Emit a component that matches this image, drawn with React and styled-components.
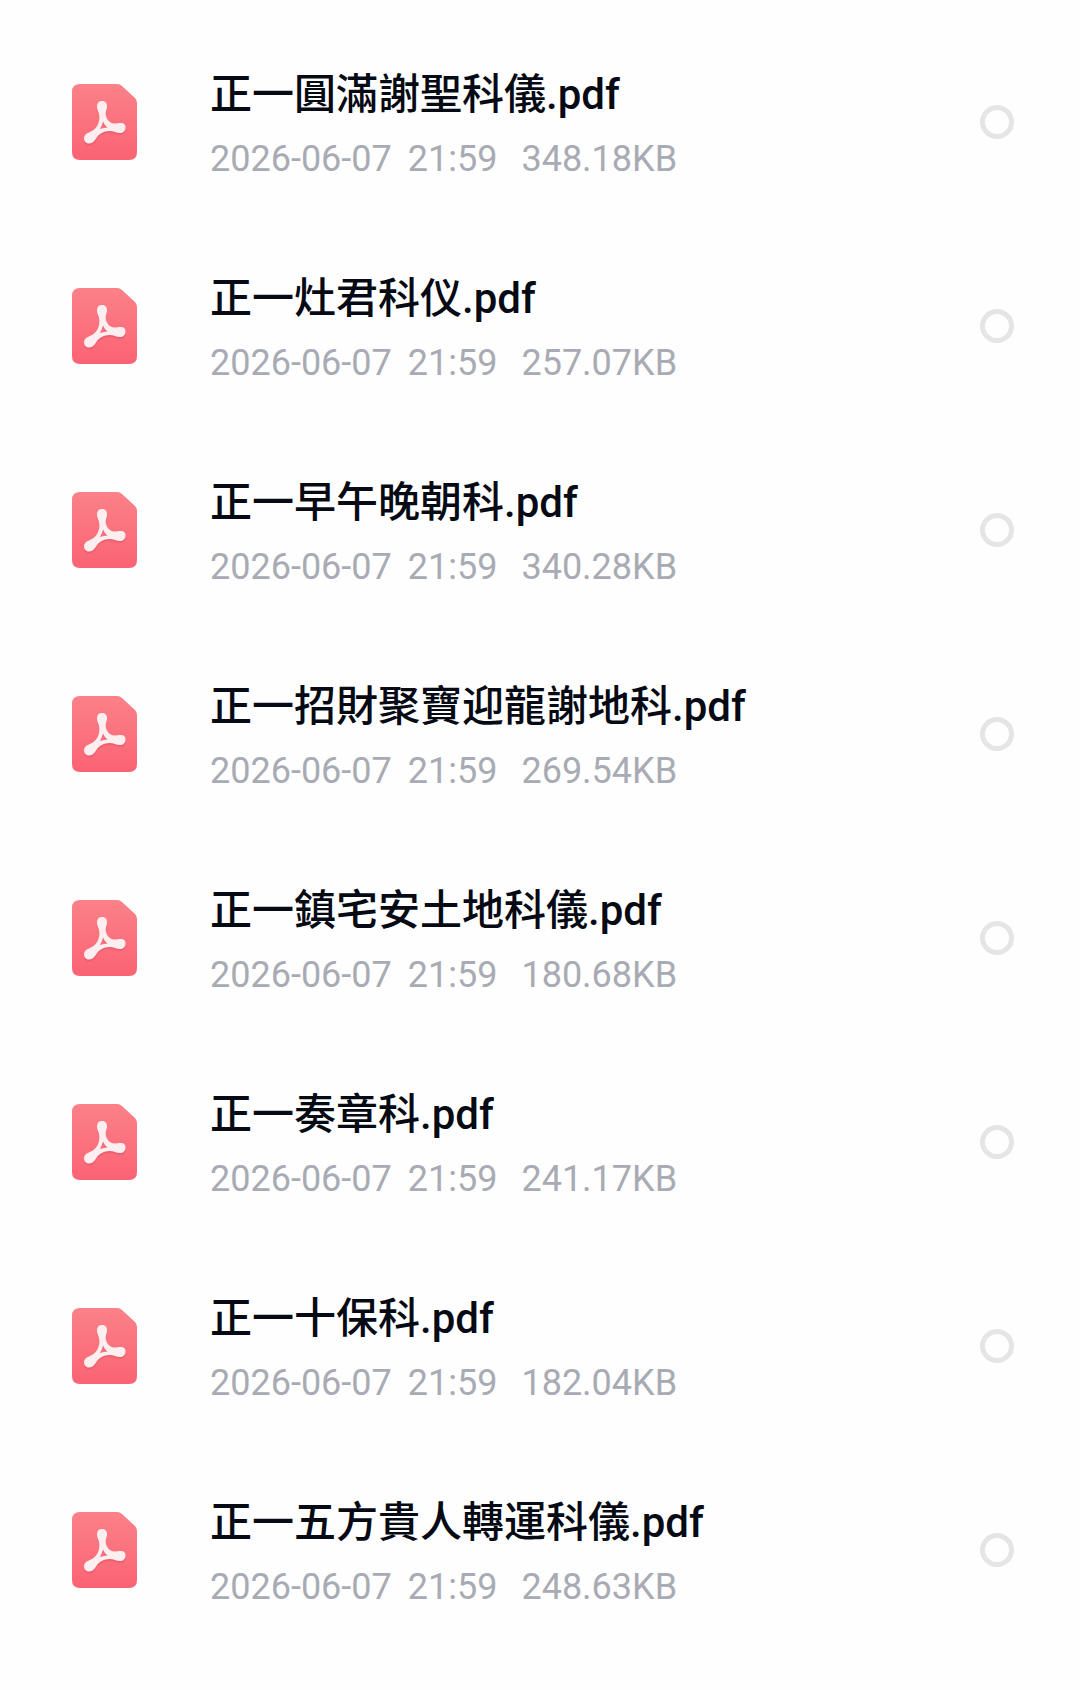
import { useState } from "react";
import styled, { createGlobalStyle } from "styled-components";

const files = [
  { name: "正一圓滿謝聖科儀.pdf", date: "2026-06-07", time: "21:59", size: "348.18KB" },
  { name: "正一灶君科仪.pdf", date: "2026-06-07", time: "21:59", size: "257.07KB" },
  { name: "正一早午晚朝科.pdf", date: "2026-06-07", time: "21:59", size: "340.28KB" },
  { name: "正一招財聚寶迎龍謝地科.pdf", date: "2026-06-07", time: "21:59", size: "269.54KB" },
  { name: "正一鎮宅安土地科儀.pdf", date: "2026-06-07", time: "21:59", size: "180.68KB" },
  { name: "正一奏章科.pdf", date: "2026-06-07", time: "21:59", size: "241.17KB" },
  { name: "正一十保科.pdf", date: "2026-06-07", time: "21:59", size: "182.04KB" },
  { name: "正一五方貴人轉運科儀.pdf", date: "2026-06-07", time: "21:59", size: "248.63KB" },
];

// three rounded lobes around a small triangular hole
const ribbonPath =
  "M30 17C33 17 35 19 35 22C35 26 33 28 34 32C35 36 38 39 42 39.500C45 39.500 46 39 49 39C52 39 53.500 41 53.500 43.500C53.500 47 51 49 48 49C44 49 41 46.500 37 47C32 47.500 28 49 25 53C23 56 21 59.500 17 59.500C14 59.500 12 57 12 54.500C12 51 15 49 18 48C22 46.500 25 43 26.500 39C28 34 27.500 31 26 27C24 22 25 17 30 17Z" +
  "M31 37.500C30.500 40 29.500 42.500 28 45C30.500 44 33 43.500 35.500 43.500C33.500 42 32 40 31 37.500Z";

const PdfIcon = () => (
  <IconSvg viewBox="0 0 65 76" aria-hidden="true">
    <defs>
      <linearGradient id="pdf-page" x1="0" y1="0" x2="0" y2="1">
        <stop offset="0" stopColor="#fb8189" />
        <stop offset="1" stopColor="#fb6374" />
      </linearGradient>
    </defs>
    <path
      d="M8 0H45Q48 0 50 2L63 14Q65 16 65 19V68Q65 76 57 76H8Q0 76 0 68V8Q0 0 8 0Z"
      fill="url(#pdf-page)"
    />
    {/* soft shadow under the ribbon */}
    <path
      d={ribbonPath}
      fill="#d8485c"
      fillRule="evenodd"
      opacity="0.35"
      transform="translate(0 2)"
    />
    <path d={ribbonPath} fill="#fdeff0" fillRule="evenodd" />
  </IconSvg>
);

const FileRow = ({ id, file, checked, onToggle }) => (
  <Row>
    <PdfIcon />
    <Info htmlFor={id}>
      <Name>{file.name}</Name>
      <Meta>
        <DateTime>
          <span>{file.date}</span>
          <span>{file.time}</span>
        </DateTime>
        <span>{file.size}</span>
      </Meta>
    </Info>
    <Check id={id} type="checkbox" checked={checked} onChange={onToggle} />
  </Row>
);

const App = () => {
  const [selected, setSelected] = useState([]);

  const toggle = (name) => {
    setSelected((prev) =>
      prev.includes(name) ? prev.filter((n) => n !== name) : [...prev, name]
    );
  };

  return (
    <>
      <GlobalStyle />
      <List>
        {files.map((file, i) => (
          <FileRow
            key={file.name}
            id={`file-${i}`}
            file={file}
            checked={selected.includes(file.name)}
            onToggle={() => toggle(file.name)}
          />
        ))}
      </List>
    </>
  );
};

const GlobalStyle = createGlobalStyle`
  * {
    box-sizing: border-box;
  }
  body {
    margin: 0;
    background: #fefefe;
    font-family: Roboto, "Noto Sans CJK SC", sans-serif;
  }
`;

const List = styled.ul`
  list-style: none;
  margin: 0;
  padding: 20px 0;
`;

const Row = styled.li`
  display: flex;
  align-items: center;
  height: 204px;
  padding: 0 66px 0 72px;
`;

const IconSvg = styled.svg`
  flex: none;
  width: 65px;
  height: 76px;
`;

const Info = styled.label`
  flex: 1;
  min-width: 0;
  display: flex;
  flex-direction: column;
  gap: 12px;
  margin-left: 73px;
  padding-top: 6px;
`;

const Name = styled.span`
  font-size: 42px;
  font-weight: 500;
  line-height: 56px;
  color: #060a14;
`;

const Meta = styled.span`
  display: flex;
  gap: 24px;
  font-size: 36px;
  line-height: 48px;
  color: #a8abb3;
`;

const DateTime = styled.span`
  display: flex;
  gap: 16px;
`;

const Check = styled.input`
  appearance: none;
  flex: none;
  width: 34px;
  height: 34px;
  margin: 0;
  border: 5px solid #e5e5e5;
  border-radius: 50%;
  cursor: pointer;

  &:checked {
    border-color: #fb6374;
    background: #fb6374;
  }
`;

export default App;
